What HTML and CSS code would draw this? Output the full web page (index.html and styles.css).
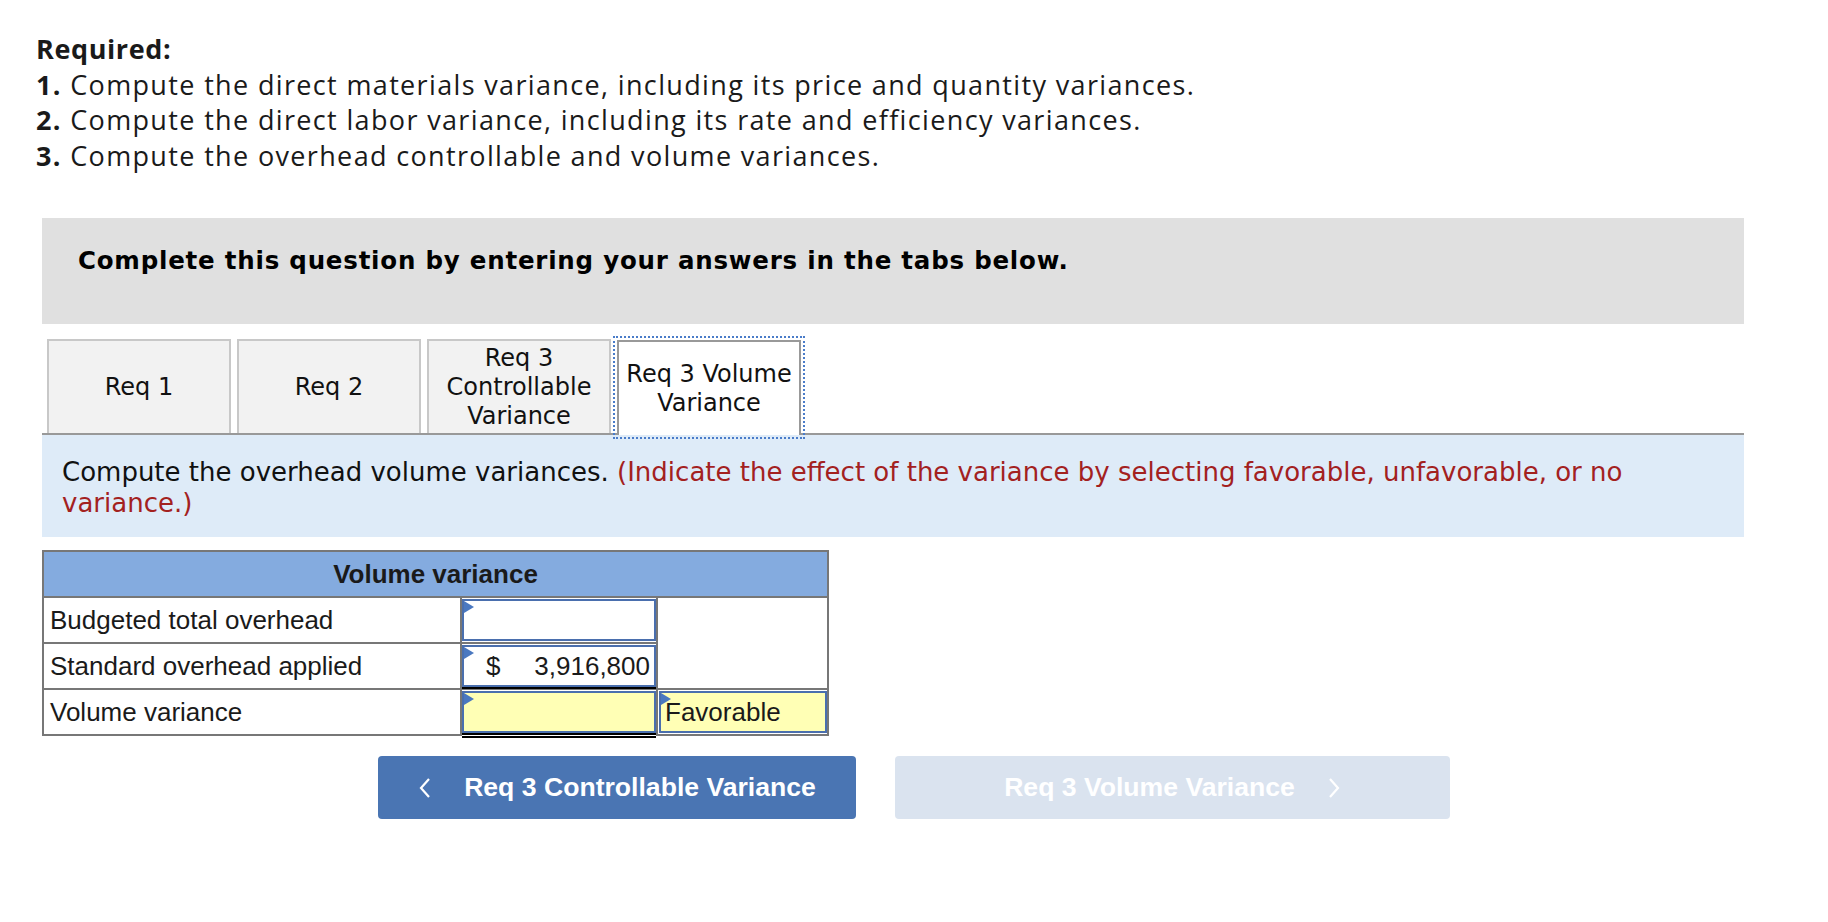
FILE: index.html
```html
<!DOCTYPE html>
<html>
<head>
<meta charset="utf-8">
<title>Volume variance</title>
<link rel="stylesheet" href="styles.css">
</head>
<body>
<div class="required">
  <div class="req-title">Required:</div>
  <div><b>1.</b> Compute the direct materials variance, including its price and quantity variances.</div>
  <div><b>2.</b> Compute the direct labor variance, including its rate and efficiency variances.</div>
  <div><b>3.</b> Compute the overhead controllable and volume variances.</div>
</div>

<div class="main">
  <div class="instructions">Complete this question by entering your answers in the tabs below.</div>

  <div class="tabs">
    <div class="tab">Req 1</div>
    <div class="tab">Req 2</div>
    <div class="tab">Req 3<br>Controllable<br>Variance</div>
    <div class="tab active">Req 3 Volume<br>Variance</div>
  </div>

  <div class="prompt">Compute the overhead volume variances. <span class="hint">(Indicate the effect of the variance by selecting favorable, unfavorable, or no<br>variance.)</span></div>

  <table class="grid">
    <tr>
      <th colspan="3" class="head">Volume variance</th>
    </tr>
    <tr>
      <td class="label">Budgeted total overhead</td>
      <td class="amt"><div class="inp"></div></td>
      <td class="blank" rowspan="2"></td>
    </tr>
    <tr>
      <td class="label">Standard overhead applied</td>
      <td class="amt"><div class="inp single"><span class="cur">$</span><span class="num">3,916,800</span></div></td>
    </tr>
    <tr>
      <td class="label">Volume variance</td>
      <td class="amt"><div class="inp yellow double"></div></td>
      <td class="sel-cell"><div class="inp yellow sel">Favorable</div></td>
    </tr>
  </table>

  <div class="nav">
    <div class="btn prev">
      <svg class="chev" width="14" height="22" viewBox="0 0 14 22"><polyline points="11,2 3,11 11,20" fill="none" stroke="#fff" stroke-width="2.2"/></svg>
      <span>Req 3 Controllable Variance</span>
    </div>
    <div class="btn next">
      <span>Req 3 Volume Variance</span>
      <svg class="chev" width="14" height="22" viewBox="0 0 14 22"><polyline points="3,2 11,11 3,20" fill="none" stroke="#fff" stroke-width="2.2"/></svg>
    </div>
  </div>
</div>
</body>
</html>
```

FILE: styles.css
```css
html, body {
  margin: 0;
  padding: 0;
  background: #fff;
}

body {
  padding-top: 31px;
  color: #111;
}

.required {
  margin-left: 36px;
  font-family: "Open Sans", "Liberation Sans", sans-serif;
  font-size: 27px;
  letter-spacing: 1.35px;
  line-height: 35.5px;
  color: #1a1a1a;
}

.req-title {
  font-weight: bold;
  letter-spacing: 0.6px;
}

.main {
  margin: 45px 0 0 42px;
  width: 1702px;
}

.instructions {
  box-sizing: border-box;
  height: 106px;
  background: #e0e0e0;
  padding: 28px 36px 0;
  font-family: "DejaVu Sans", Verdana, sans-serif;
  font-weight: bold;
  font-size: 24.5px;
  letter-spacing: 0.78px;
  line-height: 30px;
  color: #000;
}

.tabs {
  margin-top: 15px;
  display: flex;
  gap: 6px;
  padding-left: 5px;
  height: 94px;
  border-bottom: 2px solid #999;
}

.tab {
  box-sizing: border-box;
  width: 184px;
  border: 2px solid #c8c8c8;
  border-bottom: none;
  background: #f2f2f2;
  display: flex;
  align-items: center;
  justify-content: center;
  text-align: center;
  font-family: "DejaVu Sans", Verdana, sans-serif;
  font-size: 24px;
  line-height: 29px;
  color: #111;
}

.tab.active {
  margin-top: 1px;
  margin-bottom: -2px;
  height: 95px;
  background: #fff;
  border-color: #999;
  outline: 2px dotted #4a7cc9;
  outline-offset: 2px;
}

.prompt {
  background: #deebf8;
  padding: 22px 20px 19px;
  font-family: "DejaVu Sans", Verdana, sans-serif;
  font-size: 26px;
  line-height: 30.5px;
  color: #111;
}

.hint {
  color: #a3211f;
}

.grid {
  margin-top: 13px;
  border-collapse: collapse;
  border: 2px solid #777;
  font-family: "Liberation Sans", Arial, sans-serif;
  font-size: 26px;
  color: #1a1a1a;
}

.grid th, .grid td {
  border: 2px solid #777;
  padding: 0;
}

.head {
  height: 44px;
  background: #84abdf;
  font-weight: bold;
  text-align: center;
}

.label {
  width: 410px;
  height: 44px;
  padding-left: 6px !important;
  text-align: left;
}

.amt {
  width: 194px;
  padding: 1px 0 !important;
  vertical-align: top;
}

.blank {
  width: 168px;
  background: #fff;
}

.sel-cell {
  width: 168px;
  padding: 1px 0 1px 1px !important;
}

.inp {
  position: relative;
  box-sizing: border-box;
  height: 42px;
  border: 2px solid #4a6fae;
  background: #fff;
  display: flex;
  align-items: center;
  justify-content: space-between;
  padding: 0 4px 0 22px;
}

.inp::before {
  content: "";
  position: absolute;
  left: 0;
  top: 0;
  width: 0;
  height: 0;
  border-left: 10px solid #4a78c0;
  border-top: 6px solid transparent;
  border-bottom: 6px solid transparent;
}

.inp.yellow {
  background: #ffffb5;
}

.inp.single {
  box-shadow: 0 2px 0 #000;
}

.inp.double {
  box-shadow: 0 2px 0 #000, 0 3px 0 #fff, 0 5px 0 #000;
}

.inp.sel {
  justify-content: flex-start;
  padding-left: 4px;
}

.nav {
  margin: 20px 0 0 336px;
  display: flex;
  gap: 39px;
}

.btn {
  box-sizing: border-box;
  height: 63px;
  border-radius: 4px;
  display: flex;
  align-items: center;
  justify-content: center;
  gap: 32px;
  font-family: "Liberation Sans", Arial, sans-serif;
  font-weight: bold;
  font-size: 26.6px;
  color: #fff;
}

.btn.prev {
  width: 478px;
  background: #4a75b3;
}

.btn.next {
  width: 555px;
  background: #dae3ef;
}

.chev {
  display: block;
}
```
